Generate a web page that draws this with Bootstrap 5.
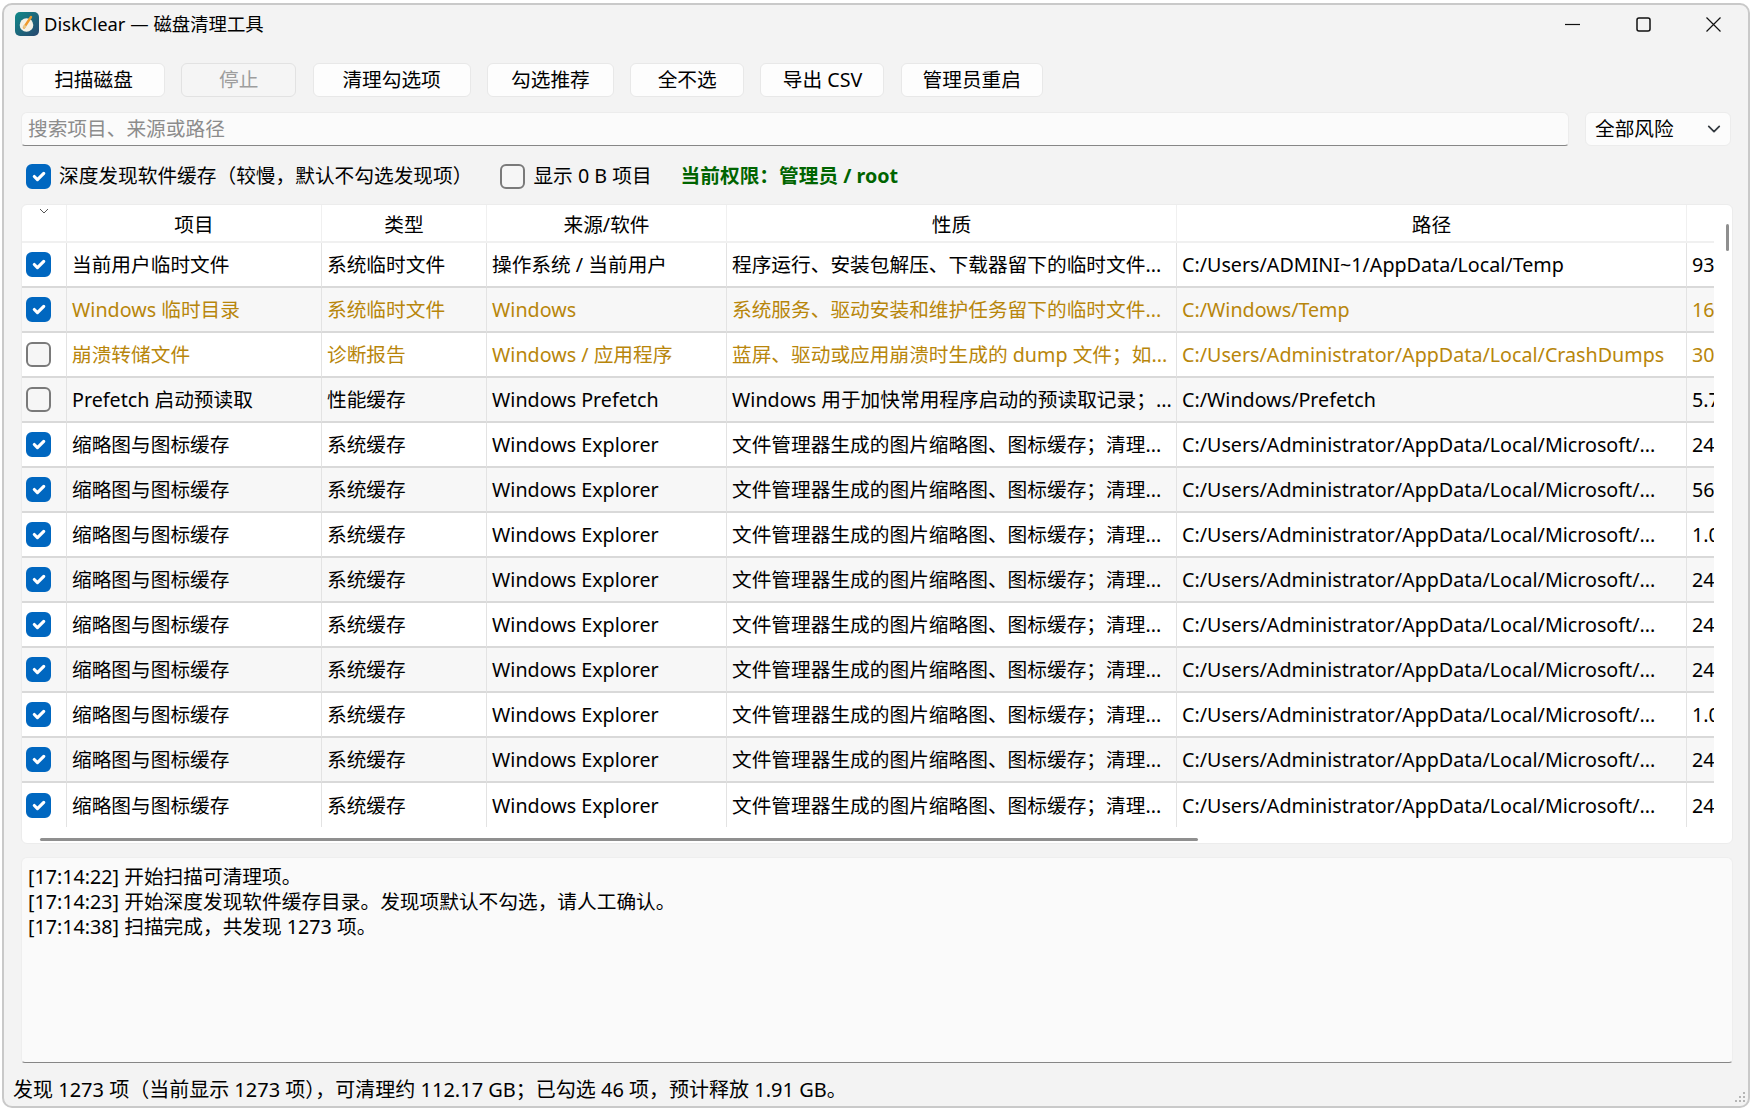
<!DOCTYPE html>
<html lang="zh-CN">
  <head>
    <meta charset="UTF-8" />
    <title>DiskClear — 磁盘清理工具</title>
    <link rel="stylesheet" href="https://cdn.jsdelivr.net/npm/bootstrap@5.3.0/dist/css/bootstrap.min.css" />
    <style>
      html, body { height: 100%; }
      body {
        background: #fff;
        color: #000;
        font-family: "Noto Sans", "Noto Sans CJK SC", sans-serif;
        font-size: 19.7px;
        overflow: hidden;
      }
      .app-window {
        width: 1748px;
        height: 1105px;
        margin: 3px 0 0 2px;
        background: #f3f3f3;
        border: 2px solid #c9c9c9;
        border-radius: 10px;
        position: relative;
      }
      .title-bar { height: 38px; padding-left: 11px; }
      .title-bar .app-title { font-size: 18.4px; margin-left: 5px; }
      .win-controls { width: 156px; margin-right: 27px; }
      .tool-row { padding: 20px 0 0 18px; gap: 16.3px; }
      .tool-btn {
        height: 34px;
        padding: 0;
        font-size: 19.7px;
        line-height: 32px;
        color: #000;
        background: #fdfdfd;
        border: 1px solid #e8e8e8;
        border-radius: 6px;
      }
      .tool-btn:disabled { background: #f5f5f5; color: #9d9d9d; border-color: #e2e2e2; opacity: 1; }
      .filter-row { padding: 15px 15px 0 17px; gap: 16px; }
      .search-box {
        height: 34px;
        width: 1548px;
        padding: 0 6px 2px;
        font-size: 19.7px;
        background: #fbfbfb;
        border: 1px solid #ececec;
        border-bottom: 1.5px solid #868686;
        border-radius: 6px 6px 4px 4px;
      }
      .search-box::placeholder { color: #8c8c8c; opacity: 1; }
      .risk-select {
        height: 34px;
        width: 146px;
        padding: 0 0 0 9px;
        font-size: 19.7px;
        color: #000;
        background-color: #fcfcfc;
        background-position: right 7px center;
        background-size: 18px 14px;
        border: 1px solid #ececec;
        border-radius: 6px;
      }
      .check-row { height: 60px; padding-left: 22px; }
      .scan-check.form-check-input {
        width: 25px;
        height: 25px;
        margin: 0;
        flex: none;
        background-color: #f6f6f6;
        border: 2px solid #7a7a7a;
        border-radius: 6px;
      }
      .scan-check.form-check-input:checked { background-color: #0067c0; border-color: #0067c0; }
      .gap-before-zero { margin-left: 28px !important; }
      .perm-label { color: #006400; font-weight: 700; margin-left: 29px; }
      .table-card {
        height: 640px;
        margin: -2px 15px 0 17px;
        background: #fff;
        border: 1px solid #ececec;
        border-radius: 6px;
        position: relative;
      }
      .table-clip { width: 1692px; height: 622px; overflow: hidden; }
      .scan-table {
        width: 1784px;
        table-layout: fixed;
        margin: 0;
        border-collapse: separate;
        border-spacing: 0;
      }
      .scan-table th, .scan-table td {
        padding: 0 5px;
        white-space: nowrap;
        overflow: hidden;
        vertical-align: middle;
        color: #000;
        font-weight: 400;
        border: 0;
        border-left: 1px solid #e3e3e3;
      }
      .scan-table th {
        height: 38px;
        padding-top: 3px;
        text-align: center;
        border-bottom: 2px solid #f0f0f0;
        border-left-color: #f0f0f0;
      }
      .scan-table td { height: 45px; border-bottom: 2px solid #d9d9d9; }
      .scan-table th:first-child, .scan-table td:first-child { border-left: 0; padding: 0 0 0 4px; }
      .scan-table th:first-child { vertical-align: top; text-align: center; line-height: 8px; padding: 0; }
      .scan-table tbody tr:nth-child(even) td { --bs-table-bg: #f7f7f7; }
      .scan-table tbody tr:last-child td { border-bottom: 0; }
      .scan-table tr.warn-row td { color: #b8860b; }
      .h-thumb {
        position: absolute;
        left: 18px;
        top: 633px;
        width: 1158px;
        height: 3px;
        border-radius: 2px;
        background: #8f8f8f;
      }
      .v-thumb {
        position: absolute;
        left: 1704px;
        top: 19px;
        width: 3px;
        height: 27px;
        border-radius: 2px;
        background: #8f8f8f;
      }
      .log-box {
        height: 206px;
        margin: 13px 15px 0 17px;
        padding: 6px 6px;
        line-height: 25px;
        background: #fafafa;
        border: 1px solid #eeeeee;
        border-bottom: 1.5px solid #868686;
        border-radius: 6px 6px 4px 4px;
      }
      .status-line { padding: 14px 0 0 9px; line-height: 26px; font-size: 20px; }
      .size-grip { position: absolute; right: 2px; bottom: 2px; }
    </style>
  </head>
  <body>
    <div class="app-window d-flex flex-column">
      <div class="title-bar d-flex align-items-center flex-shrink-0">
        <svg width="24" height="24" viewBox="0 0 24 24">
          <defs>
            <linearGradient id="logoBg" x1="0" y1="0" x2="1" y2="1">
              <stop offset="0" stop-color="#118a8a" />
              <stop offset="1" stop-color="#27466e" />
            </linearGradient>
          </defs>
          <rect width="24" height="24" rx="5" fill="url(#logoBg)" />
          <circle cx="11.5" cy="13" r="6.8" fill="#f4f1e6" />
          <path d="M9 15.5 L16 5" stroke="#ef9a2c" stroke-width="2.4" stroke-linecap="round" />
          <circle cx="9.5" cy="14.5" r="1.6" fill="#e8c98c" />
        </svg>
        <span class="app-title">DiskClear — 磁盘清理工具</span>
        <div class="win-controls ms-auto d-flex justify-content-between align-items-center">
          <svg width="15" height="15" viewBox="0 0 15 15"><path d="M0 7.5H15" stroke="#111" stroke-width="1.2" /></svg>
          <svg width="15" height="15" viewBox="0 0 15 15"><rect x="1" y="1" width="13" height="13" rx="2" fill="none" stroke="#111" stroke-width="1.5" /></svg>
          <svg width="15" height="15" viewBox="0 0 15 15"><path d="M0.5 0.5L14.5 14.5M14.5 0.5L0.5 14.5" stroke="#111" stroke-width="1.2" /></svg>
        </div>
      </div>

      <div class="tool-row d-flex flex-shrink-0">
        <button type="button" class="btn tool-btn" style="width:143px">扫描磁盘</button>
        <button type="button" class="btn tool-btn" style="width:115px" disabled>停止</button>
        <button type="button" class="btn tool-btn" style="width:158px">清理勾选项</button>
        <button type="button" class="btn tool-btn" style="width:127px">勾选推荐</button>
        <button type="button" class="btn tool-btn" style="width:114px">全不选</button>
        <button type="button" class="btn tool-btn" style="width:124px">导出 CSV</button>
        <button type="button" class="btn tool-btn" style="width:142px">管理员重启</button>
      </div>

      <div class="filter-row d-flex flex-shrink-0">
        <input type="text" class="form-control search-box" placeholder="搜索项目、来源或路径" />
        <select class="form-select risk-select">
          <option selected>全部风险</option>
        </select>
      </div>

      <div class="check-row d-flex align-items-center flex-shrink-0">
        <input class="form-check-input scan-check" type="checkbox" checked />
        <span class="ms-2">深度发现软件缓存（较慢，默认不勾选发现项）</span>
        <input class="form-check-input scan-check gap-before-zero" type="checkbox" />
        <span class="ms-2">显示 0 B 项目</span>
        <span class="perm-label">当前权限：管理员 / root</span>
      </div>

      <div class="table-card flex-shrink-0">
        <div class="table-clip">
          <table class="table scan-table">
            <colgroup>
              <col style="width:44px" /><col style="width:255px" /><col style="width:165px" />
              <col style="width:240px" /><col style="width:450px" /><col style="width:510px" /><col style="width:120px" />
            </colgroup>
            <thead>
              <tr>
                <th><svg width="10" height="6" viewBox="0 0 10 6"><path d="M1 1L5 5L9 1" fill="none" stroke="#555" stroke-width="1" /></svg></th>
                <th>项目</th>
                <th>类型</th>
                <th>来源/软件</th>
                <th>性质</th>
                <th>路径</th>
                <th></th>
              </tr>
            </thead>
            <tbody id="rows"></tbody>
          </table>
        </div>
        <div class="h-thumb"></div>
        <div class="v-thumb"></div>
      </div>

      <div class="log-box flex-shrink-0">
        <div>[17:14:22] 开始扫描可清理项。</div>
        <div>[17:14:23] 开始深度发现软件缓存目录。发现项默认不勾选，请人工确认。</div>
        <div>[17:14:38] 扫描完成，共发现 1273 项。</div>
      </div>

      <div class="status-line flex-shrink-0">发现 1273 项（当前显示 1273 项），可清理约 112.17 GB；已勾选 46 项，预计释放 1.91 GB。</div>

      <svg class="size-grip" width="12" height="12" viewBox="0 0 12 12" fill="#b5b5b5">
        <rect x="9" y="0" width="2" height="2" /><rect x="5" y="4" width="2" height="2" /><rect x="9" y="4" width="2" height="2" />
        <rect x="1" y="8" width="2" height="2" /><rect x="5" y="8" width="2" height="2" /><rect x="9" y="8" width="2" height="2" />
      </svg>
    </div>

    <script>
      const thumbPath = "C:/Users/Administrator/AppData/Local/Microsoft/...";
      const thumbNote = "文件管理器生成的图片缩略图、图标缓存；清理...";
      const thumb = (size) => [true, "", "缩略图与图标缓存", "系统缓存", "Windows Explorer", thumbNote, thumbPath, size];
      const data = [
        [true, "", "当前用户临时文件", "系统临时文件", "操作系统 / 当前用户", "程序运行、安装包解压、下载器留下的临时文件...", "C:/Users/ADMINI~1/AppData/Local/Temp", "93"],
        [true, "warn-row", "Windows 临时目录", "系统临时文件", "Windows", "系统服务、驱动安装和维护任务留下的临时文件...", "C:/Windows/Temp", "16"],
        [false, "warn-row", "崩溃转储文件", "诊断报告", "Windows / 应用程序", "蓝屏、驱动或应用崩溃时生成的 dump 文件；如...", "C:/Users/Administrator/AppData/Local/CrashDumps", "30"],
        [false, "", "Prefetch 启动预读取", "性能缓存", "Windows Prefetch", "Windows 用于加快常用程序启动的预读取记录；...", "C:/Windows/Prefetch", "5.7"],
        thumb("24"), thumb("56"), thumb("1.0"), thumb("24"), thumb("24"), thumb("24"), thumb("1.0"), thumb("24"), thumb("24"),
      ];
      const body = document.getElementById("rows");
      data.forEach((row) => {
        const tr = document.createElement("tr");
        tr.className = row[1];
        tr.innerHTML = `
          <td><input class="form-check-input scan-check d-block" type="checkbox" ${row[0] ? "checked" : ""} /></td>
          <td>${row[2]}</td><td>${row[3]}</td><td>${row[4]}</td><td>${row[5]}</td><td>${row[6]}</td><td>${row[7]}</td>`;
        body.appendChild(tr);
      });
    </script>
    <script src="https://cdn.jsdelivr.net/npm/bootstrap@5.3.0/dist/js/bootstrap.bundle.min.js"></script>
  </body>
</html>
